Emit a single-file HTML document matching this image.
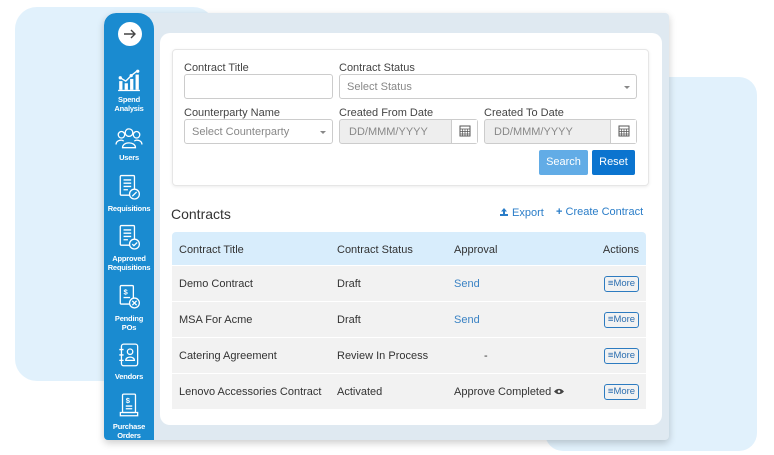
<!DOCTYPE html>
<html><head><meta charset="utf-8"><style>
*{box-sizing:border-box;margin:0;padding:0}
body{width:774px;height:455px;background:#fff;font-family:"Liberation Sans",sans-serif;position:relative;overflow:hidden;color:#333}
.b1{position:absolute;left:15px;top:7px;width:200px;height:374px;background:#e1f1fc;border-radius:22px}
.b2{position:absolute;left:545px;top:77px;width:212px;height:374px;background:#e1f1fc;border-radius:18px}
.frame{position:absolute;left:104px;top:13px;width:565px;height:427px;background:#dfe9f1;border-radius:12px 4px 4px 4px;box-shadow:0 3px 8px rgba(0,0,0,.2);overflow:hidden}
.side{position:absolute;left:0;top:0;width:50px;height:427px;background:#1a8bd0;border-radius:12px 16px 0 0}
.circ{position:absolute;left:14px;top:9px;width:24px;height:24px;border-radius:50%;background:#fff}
.nav{position:absolute;left:0;width:50px;text-align:center;color:#fff;font-size:7.5px;line-height:9px;font-weight:bold;letter-spacing:-.2px}
.nav svg{display:block;margin:0 auto 3px}
.card{position:absolute;left:56px;top:20px;width:502px;height:392px;background:#fff;border-radius:10px}
.filter{position:absolute;left:12px;top:16px;width:477px;height:137px;border:1px solid #e6e6e6;border-radius:4px;box-shadow:0 1px 3px rgba(0,0,0,.08)}
.lbl{position:absolute;font-size:11px;color:#444}
.inp{position:absolute;border:1px solid #ccc;border-radius:3px;height:25px;font-size:11px;color:#888;padding:6px 7px;background:#fff}
.dis{background:#eee}
.caret{position:absolute;right:6px;top:11px;border:3px solid transparent;border-top:3px solid #888}
.cal{position:absolute;right:0;top:0;width:26px;height:23px;background:#fff;border-left:1px solid #ccc}
.btn{position:absolute;height:25px;color:#fff;font-size:11px;text-align:center;line-height:25px;border-radius:2px}
.tbl{position:absolute;left:12px;top:199px;width:474px}
.row{position:relative;height:36px;background:#f2f2f2;border-bottom:1px solid #fff;font-size:11px}
.row span{position:absolute;top:12px}
.hd{background:#d8edfc;height:34px;border-radius:4px 4px 0 0}
.more{position:absolute;right:7px;top:10px;width:35px;height:16px;border:1.5px solid #2d7bc0;border-radius:3px;color:#2d6fb0;font-size:9.5px;line-height:13px;text-align:center}
.send{color:#3b83c4}
</style></head><body>
<div class="b1"></div><div class="b2"></div>
<div class="frame">
 <div class="side">
  <div class="circ"><svg width="24" height="24" viewBox="0 0 24 24"><path d="M6 12h11M13 8l4 4-4 4" stroke="#444" stroke-width="1.4" fill="none"/></svg></div>
  <div class="nav" style="top:55px"><svg width="24" height="24" viewBox="0 0 22 22" fill="#fff"><rect x="2" y="12" width="3" height="8"/><rect x="7" y="14" width="3" height="6"/><rect x="12" y="10" width="3" height="10"/><rect x="17" y="6" width="3" height="14"/><path d="M3 9l5 3 5-5 5-4" stroke="#fff" stroke-width="1.3" fill="none"/><circle cx="3" cy="9" r="1.5"/><circle cx="13" cy="7" r="1.5"/><circle cx="19" cy="3" r="1.5"/><rect x="1" y="20" width="20" height="1.2"/></svg>Spend<br>Analysis</div>
  <div class="nav" style="top:113px"><svg width="28" height="24" viewBox="0 0 26 22" fill="none" stroke="#fff" stroke-width="1.2"><circle cx="13" cy="6" r="3.5"/><circle cx="6" cy="8" r="3"/><circle cx="20" cy="8" r="3"/><path d="M7 20c0-6 12-6 12 0z"/><path d="M1 17c0-4 6-5 7-3M25 17c0-4-6-5-7-3"/></svg>Users</div>
  <div class="nav" style="top:160px"><svg width="24" height="28" viewBox="0 0 22 25" fill="none" stroke="#fff" stroke-width="1.2"><rect x="3" y="2" width="13" height="18" rx="1"/><path d="M6 6h7M6 9h7M6 12h7M6 15h4"/><circle cx="16" cy="19" r="4.5" fill="#1a8bd0"/><path d="M14 21l4-4"/></svg>Requisitions</div>
  <div class="nav" style="top:210px"><svg width="24" height="28" viewBox="0 0 22 25" fill="none" stroke="#fff" stroke-width="1.2"><rect x="3" y="2" width="13" height="18" rx="1"/><path d="M6 6h7M6 9h7M6 12h7M6 15h4"/><circle cx="16" cy="19" r="4.5" fill="#1a8bd0"/><path d="M14 19l1.5 1.5 3-3"/></svg>Approved<br>Requisitions</div>
  <div class="nav" style="top:270px"><svg width="24" height="28" viewBox="0 0 22 25" fill="none" stroke="#fff" stroke-width="1.2"><rect x="3" y="2" width="12" height="17" rx="1"/><text x="6" y="10" font-size="7" fill="#fff" stroke="none">$</text><path d="M6 13h6"/><circle cx="16" cy="18" r="4.5" fill="#1a8bd0"/><path d="M14 16l4 4M18 16l-4 4"/></svg>Pending<br>POs</div>
  <div class="nav" style="top:329px"><svg width="24" height="27" viewBox="0 0 22 25" fill="none" stroke="#fff" stroke-width="1.2"><rect x="4" y="2" width="15" height="20" rx="2"/><path d="M2 7h4M2 12h4M2 17h4"/><circle cx="12" cy="9" r="2.5"/><path d="M8 17c0-4 8-4 8 0z"/></svg>Vendors</div>
  <div class="nav" style="top:379px"><svg width="24" height="27" viewBox="0 0 22 25" fill="none" stroke="#fff" stroke-width="1.2"><rect x="5" y="2" width="12" height="17" rx="1"/><text x="8" y="10" font-size="7" fill="#fff" stroke="none">$</text><path d="M8 13h6M8 15.5h6M3 19h16v3H3z"/></svg>Purchase<br>Orders</div>
 </div>
 <div class="card">
  <div class="filter">
   <div class="lbl" style="left:11px;top:12px">Contract Title</div>
   <div class="inp" style="left:11px;top:24px;width:149px"></div>
   <div class="lbl" style="left:166px;top:12px">Contract Status</div>
   <div class="inp" style="left:166px;top:24px;width:298px">Select Status<div class="caret"></div></div>
   <div class="lbl" style="left:11px;top:57px">Counterparty Name</div>
   <div class="inp" style="left:11px;top:69px;width:149px">Select Counterparty<div class="caret"></div></div>
   <div class="lbl" style="left:166px;top:57px">Created From Date</div>
   <div class="inp dis" style="left:166px;top:69px;width:139px;padding-left:9px">DD/MMM/YYYY<div class="cal"><svg width="26" height="23" viewBox="0 0 26 23"><rect x="8" y="6" width="10" height="10" fill="none" stroke="#555"/><path d="M8 9h10M10.5 9v7M13 9v7M15.5 9v7M8 11.5h10M8 14h10" stroke="#555" stroke-width=".7"/></svg></div></div>
   <div class="lbl" style="left:311px;top:57px">Created To Date</div>
   <div class="inp dis" style="left:311px;top:69px;width:153px;padding-left:9px">DD/MMM/YYYY<div class="cal"><svg width="26" height="23" viewBox="0 0 26 23"><rect x="8" y="6" width="10" height="10" fill="none" stroke="#555"/><path d="M8 9h10M10.5 9v7M13 9v7M15.5 9v7M8 11.5h10M8 14h10" stroke="#555" stroke-width=".7"/></svg></div></div>
   <div class="btn" style="left:366px;top:100px;width:49px;background:#62ace6">Search</div>
   <div class="btn" style="left:419px;top:100px;width:43px;background:#0b74cf">Reset</div>
  </div>
  <div style="position:absolute;left:11px;top:173px;font-size:14px;color:#333">Contracts</div>
  <div style="position:absolute;left:339px;top:174px;font-size:11px;color:#2a7dc8"><svg width="10" height="10" viewBox="0 0 10 10" style="vertical-align:-1px"><path d="M5 1L2 4.5h2V7h2V4.5h2z M1 7v2h8V7" fill="#2a7dc8"/></svg> Export</div>
  <div style="position:absolute;left:396px;top:173px;font-size:11px;color:#2a7dc8"><b>+</b> Create Contract</div>
  <div class="tbl">
   <div class="row hd"><span style="left:7px">Contract Title</span><span style="left:165px">Contract Status</span><span style="left:282px">Approval</span><span style="right:7px">Actions</span></div>
   <div class="row"><span style="left:7px">Demo Contract</span><span style="left:165px">Draft</span><span class="send" style="left:282px">Send</span><div class="more">&#8801;More</div></div>
   <div class="row"><span style="left:7px">MSA For Acme</span><span style="left:165px">Draft</span><span class="send" style="left:282px">Send</span><div class="more">&#8801;More</div></div>
   <div class="row"><span style="left:7px">Catering Agreement</span><span style="left:165px">Review In Process</span><span style="left:312px">-</span><div class="more">&#8801;More</div></div>
   <div class="row"><span style="left:7px">Lenovo Accessories Contract</span><span style="left:165px">Activated</span><span style="left:282px">Approve Completed <svg width="10" height="7" viewBox="0 0 10 7"><path d="M0 3.5C3 0 7 0 10 3.5 7 7 3 7 0 3.5z" fill="#444"/><circle cx="5" cy="3.5" r="1.3" fill="#fff"/></svg></span><div class="more">&#8801;More</div></div>
  </div>
 </div>
</div>
</body></html>
